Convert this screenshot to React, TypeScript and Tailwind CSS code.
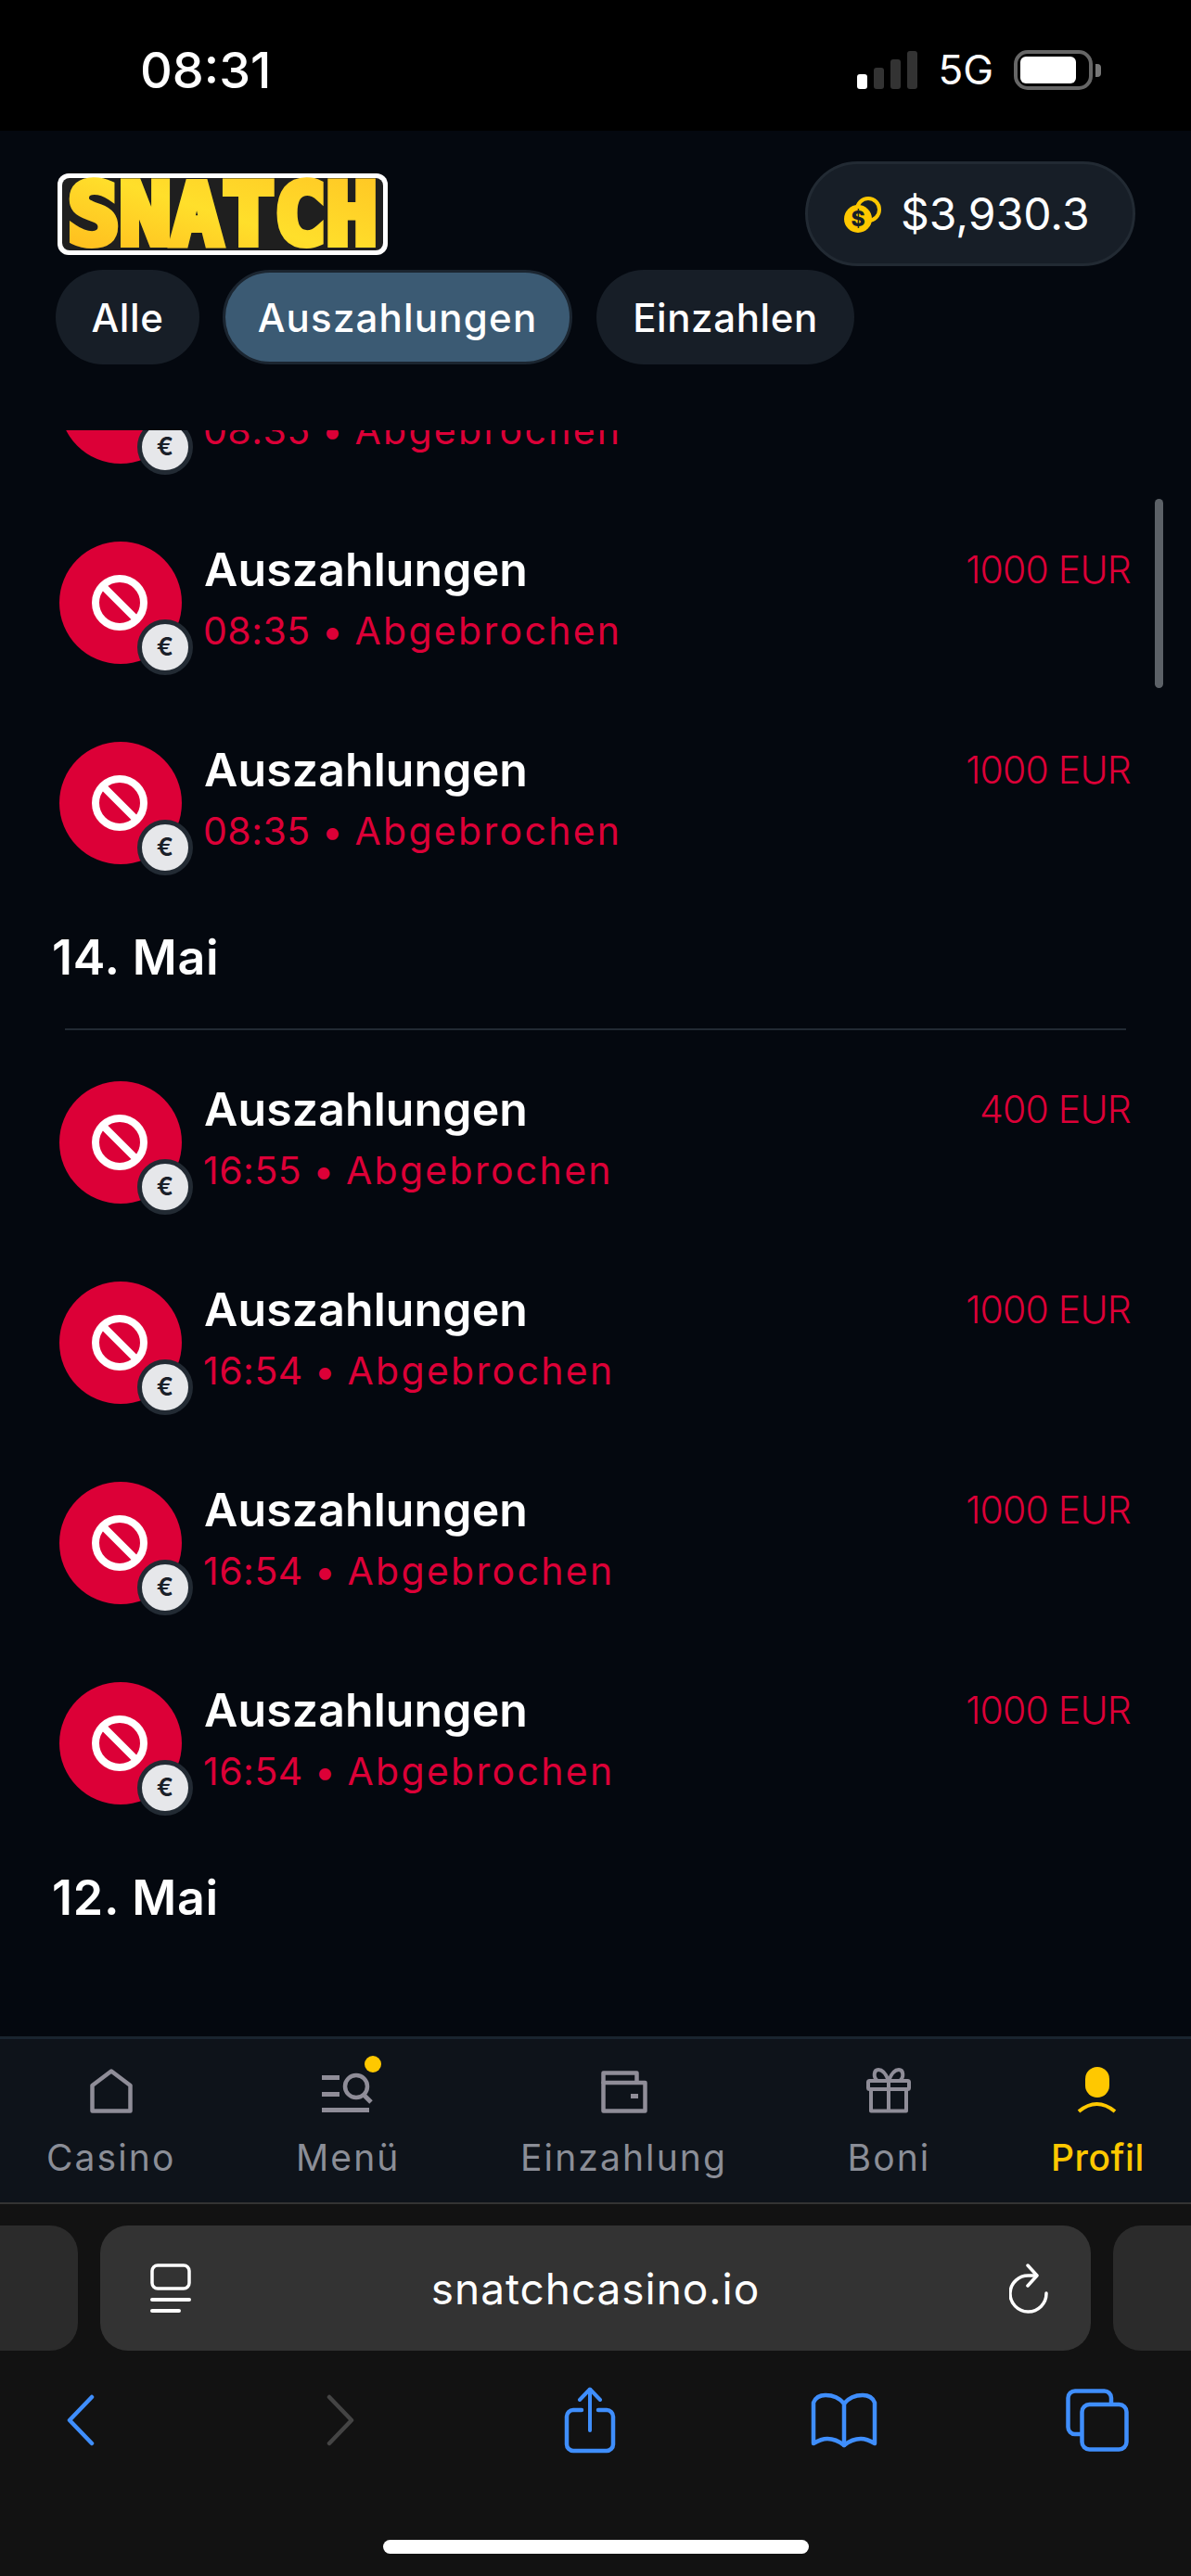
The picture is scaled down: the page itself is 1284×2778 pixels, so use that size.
import React from "react";

function Ban() {
  return (
    <svg className="mr-[2px]" width="60" height="60" viewBox="0 0 60 60" fill="none" stroke="#ffffff" strokeWidth="8">
      <circle cx="30" cy="30" r="26" />
      <path d="M12 12 L48 48" />
    </svg>
  );
}

function Row({ time, amount }: { time: string; amount: string }) {
  return (
    <div className="flex h-[216px] shrink-0 pl-[64px] pr-[65px] pt-[27px]">
      <div className="relative mt-[3px] flex h-[132px] w-[132px] shrink-0 items-center justify-center rounded-full bg-[#dc0037]">
        <Ban />
        <div className="absolute left-[84px] top-[84px] flex h-[60px] w-[60px] items-center justify-center rounded-full border-[5px] border-[#222a33] bg-[#e6e7ea] text-[27px] font-semibold text-[#1a2029]">
          €
        </div>
      </div>
      <div className="ml-[24px] flex-1">
        <div className="text-[50px] font-semibold leading-[67px] tracking-[0.1px] text-white">Auszahlungen</div>
        <div className="-ml-[1px] text-[41px] font-normal leading-[65px] text-[#dc0037]">
          <span className="tracking-[0.5px]">{time} • </span>
          <span className="tracking-[2.3px]">Abgebrochen</span>
        </div>
      </div>
      <div className="text-[41px] font-light leading-[66px] tracking-[-0.8px] text-[#dc0037]">{amount}</div>
    </div>
  );
}

function Heading({ children }: { children: string }) {
  return <div className="h-[92px] shrink-0 pl-[56px] text-[52px] font-semibold leading-[94px] tracking-[0.8px] text-white">{children}</div>;
}

function NavItem({ label, active, icon }: { label: string; active?: boolean; icon: React.ReactNode }) {
  return (
    <div className="flex flex-col items-center">
      <div className="relative flex h-[50px] items-end">{icon}</div>
      <div className={`mt-[18px] text-[39px] leading-[60px] ${active ? "font-medium tracking-[0.6px] text-[#ffc800]" : "font-normal tracking-[2.1px] text-[#8b8e97]"}`}>{label}</div>
    </div>
  );
}

function Logo() {
  return (
    <svg width="358" height="90" viewBox="0 0 358 90" className="block">
      <defs>
        <linearGradient id="lg" x1="0" y1="1" x2="1" y2="0">
          <stop offset="0" stopColor="#ffb81c" />
          <stop offset="0.5" stopColor="#ffdf2b" />
          <stop offset="1" stopColor="#ffc524" />
        </linearGradient>
      </defs>
      <rect x="1" y="1" width="356" height="88" rx="12" fill="#ffffff" />
      <rect x="6" y="6" width="346" height="78" rx="8" fill="#1f1f1f" />
      <text
        x="12"
        y="77"
        textLength="334"
        lengthAdjust="spacingAndGlyphs"
        fill="url(#lg)"
        stroke="url(#lg)"
        strokeWidth="8"
        strokeLinejoin="miter"
        style={{ fontFamily: "'DejaVu Sans Mono', monospace", fontWeight: 700, fontSize: 90 }}
      >
        SNATCH
      </text>
    </svg>
  );
}

export default function App() {
  return (
    <div className="flex h-[2778px] w-[1284px] flex-col overflow-hidden bg-[#04080f] [font-family:Inter,sans-serif]">
      {/* status bar */}
      <div className="flex h-[141px] shrink-0 items-start bg-black pl-[151px] pr-[97px]">
        <div className="mt-[44px] text-[54px] font-medium leading-[64px] text-white">08:31</div>
        <div className="ml-auto mt-[54px] flex items-start">
          <div className="flex h-[42px] items-end gap-[7px]">
            <div className="h-[16px] w-[11px] rounded-[3px] bg-white" />
            <div className="h-[23px] w-[11px] rounded-[3px] bg-[#333333]" />
            <div className="h-[32px] w-[11px] rounded-[3px] bg-[#333333]" />
            <div className="h-[41px] w-[11px] rounded-[3px] bg-[#333333]" />
          </div>
          <div className="ml-[22px] mt-[-5px] text-[44px] font-normal leading-[52px] text-white">5G</div>
          <div className="ml-[22px] flex h-[43px] w-[85px] items-center rounded-[15px] border-[4px] border-[#666666] pl-[3px]">
            <div className="h-[29px] w-[60px] rounded-[6px] bg-white" />
          </div>
          <div className="ml-[3px] mt-[15px] h-[14px] w-[6px] rounded-r-[4px] bg-[#777777]" />
        </div>
      </div>

      {/* header */}
      <div className="h-[323px] shrink-0 pt-[33px]">
        <div className="flex h-[113px] items-center justify-between pl-[61px] pr-[60px]">
          <Logo />
          <div className="flex h-[113px] w-[356px] items-center rounded-full border-[3px] border-[#222a33] bg-[#171e27] pl-[39px]">
            <svg width="40" height="40" viewBox="0 0 40 40">
              <circle cx="26" cy="15" r="12" fill="none" stroke="#ffc800" strokeWidth="4" />
              <circle cx="15" cy="25" r="15" fill="#ffc800" />
              <text x="15" y="33" textAnchor="middle" fontSize="23" fontWeight="800" fill="#171e27">$</text>
            </svg>
            <div className="ml-[21px] text-[48px] font-normal leading-[60px] text-white">$3,930.3</div>
          </div>
        </div>
        <div className="mt-[4px] flex h-[102px] items-center pl-[60px]">
          <div className="flex h-[102px] w-[155px] items-center justify-center rounded-full bg-[#171e27] text-[42px] font-medium tracking-[0.6px] text-white">Alle</div>
          <div className="ml-[25px] flex h-[102px] w-[377px] items-center justify-center rounded-full border-[3px] border-[#1b2530] bg-[#3b5a73] text-[42px] font-medium tracking-[1.2px] text-white">Auszahlungen</div>
          <div className="ml-[26px] flex h-[102px] w-[278px] items-center justify-center rounded-full bg-[#171e27] text-[42px] font-medium tracking-[0.6px] text-white">Einzahlen</div>
        </div>
      </div>

      {/* list */}
      <div className="relative min-h-0 flex-1 overflow-hidden bg-[#04080f]">
        <div className="mt-[-126px] flex flex-col">
          <Row time="08:35" amount="1000 EUR" />
          <Row time="08:35" amount="1000 EUR" />
          <Row time="08:35" amount="1000 EUR" />
          <Heading>14. Mai</Heading>
          <div className="ml-[70px] mt-[31px] h-[2px] w-[1144px] shrink-0 bg-[#222a33]" />
          <div className="h-[25px] shrink-0" />
          <Row time="16:55" amount="400 EUR" />
          <Row time="16:54" amount="1000 EUR" />
          <Row time="16:54" amount="1000 EUR" />
          <Row time="16:54" amount="1000 EUR" />
          <Heading>12. Mai</Heading>
        </div>
        <div className="absolute left-[1245px] top-[74px] h-[204px] w-[9px] rounded-full bg-[#5c6167]" />
      </div>

      {/* bottom nav */}
      <div className="flex h-[181px] shrink-0 items-start justify-between border-t-[3px] border-b-[2px] border-t-[#1a2530] border-b-[#333333] bg-[#0e131a] pl-[50px] pr-[50px] pt-[30px]">
        <NavItem
          label="Casino"
          icon={
            <svg width="46" height="48" viewBox="0 0 46 48" fill="none" stroke="#8f8d98" strokeWidth="4.5" strokeLinejoin="round">
              <path d="M2.5 18 L23 2.5 L43.5 18 V45.5 H2.5 Z" />
            </svg>
          }
        />
        <NavItem
          label="Menü"
          icon={
            <>
              <svg width="56" height="44" viewBox="0 0 56 44" fill="#8f8d98">
                <rect x="0" y="3" width="19" height="5" />
                <rect x="0" y="21" width="19" height="5" />
                <rect x="0" y="38" width="51" height="5" />
                <circle cx="37" cy="15" r="12" fill="none" stroke="#8f8d98" strokeWidth="4.5" />
                <path d="M45 24 L53 32" fill="none" stroke="#8f8d98" strokeWidth="5" />
              </svg>
              <div className="absolute left-[46px] top-[-12px] h-[18px] w-[18px] rounded-full bg-[#ffc800]" />
            </>
          }
        />
        <NavItem
          label="Einzahlung"
          icon={
            <svg width="50" height="46" viewBox="0 0 50 46" fill="none" stroke="#8f8d98" strokeWidth="4.5" strokeLinejoin="round">
              <path d="M2.5 14 V2.5 H38.5 V13" />
              <rect x="2.5" y="13" width="45" height="30.5" />
              <rect x="32" y="25" width="8" height="5" fill="#8f8d98" stroke="none" />
            </svg>
          }
        />
        <NavItem
          label="Boni"
          icon={
            <svg width="48" height="49" viewBox="0 0 48 49" fill="none" stroke="#8f8d98" strokeWidth="4" strokeLinejoin="round">
              <rect x="2" y="14" width="44" height="9" rx="1.5" />
              <path d="M5 23 V46.5 H43 V23" />
              <path d="M24 14 V46" />
              <path d="M24 14 C21 6 17 2 13 2 C8 2 7 10 12 14" />
              <path d="M24 14 C27 6 31 2 35 2 C40 2 41 10 36 14" />
            </svg>
          }
        />
        <NavItem
          active
          label="Profil"
          icon={
            <svg width="44" height="50" viewBox="0 0 44 50" fill="none">
              <rect x="9" y="0" width="26" height="33" rx="13" fill="#ffc800" />
              <path d="M2 48 Q21.5 32 41 48" stroke="#ffc800" strokeWidth="4" />
            </svg>
          }
        />
      </div>

      {/* safari */}
      <div className="h-[401px] shrink-0 bg-[#121212] pt-[23px]">
        <div className="flex h-[135px] gap-[24px]">
          <div className="w-[84px] rounded-r-[30px] bg-[#2b2b2b]" />
          <div className="flex w-[1068px] items-center rounded-[30px] bg-[#333333] pl-[54px] pr-[44px]">
            <svg width="44" height="54" viewBox="0 0 44 54" fill="none" stroke="#ffffff" strokeWidth="3.5" strokeLinecap="round">
              <rect x="2" y="2" width="40" height="25" rx="6" />
              <path d="M2 39 H42" strokeWidth="4" />
              <path d="M2 51 H31" strokeWidth="4" />
            </svg>
            <div className="flex-1 pr-[10px] text-center text-[46px] font-normal leading-[60px] tracking-[0.95px] text-white">snatchcasino.io</div>
            <svg width="44" height="54" viewBox="0 0 44 54" fill="none" stroke="#ffffff" strokeWidth="3.5" strokeLinecap="round" strokeLinejoin="round">
              <path d="M40 32 A19.5 19.5 0 1 1 22 13 H29" />
              <path d="M20 2 L30 13 L20 24" />
            </svg>
          </div>
          <div className="w-[84px] rounded-l-[30px] bg-[#2b2b2b]" />
        </div>
        <div className="flex h-[150px] items-center pl-[72px]">
          <svg width="30" height="56" viewBox="0 0 30 56" fill="none" stroke="#3f8efc" strokeWidth="4.5" strokeLinecap="round" strokeLinejoin="round">
            <path d="M27 3 L3 28 L27 53" />
          </svg>
          <svg className="ml-[250px]" width="30" height="56" viewBox="0 0 30 56" fill="none" stroke="#444444" strokeWidth="4.5" strokeLinecap="round" strokeLinejoin="round">
            <path d="M3 3 L27 28 L3 53" />
          </svg>
          <svg className="ml-[226px]" width="56" height="72" viewBox="0 0 56 72" fill="none" stroke="#3f8efc" strokeWidth="4.5" strokeLinecap="round" strokeLinejoin="round">
            <path d="M19 25 H10 A7 7 0 0 0 3 32 V62 A7 7 0 0 0 10 69 H46 A7 7 0 0 0 53 62 V32 A7 7 0 0 0 46 25 H37" />
            <path d="M28 47 V3" strokeWidth="4" />
            <path d="M17 14 L28 2.5 L39 14" strokeWidth="4" />
          </svg>
          <svg className="ml-[210px]" width="72" height="60" viewBox="0 0 72 60" fill="none" stroke="#3f8efc" strokeWidth="4.5" strokeLinecap="round" strokeLinejoin="round">
            <path d="M36 12 C31 6 23 3 16 3 C10 3 5 6 3 11 V55 C8 52 12 50 18 50 C25 50 31 53 36 57 C41 53 47 50 54 50 C60 50 64 52 69 55 V11 C67 6 62 3 56 3 C49 3 41 6 36 12 Z" />
            <path d="M36 12 V57" />
          </svg>
          <svg className="ml-[203px]" width="68" height="68" viewBox="0 0 68 68" fill="none" stroke="#3f8efc" strokeWidth="4.5" strokeLinejoin="round">
            <path d="M16 49 H10 A7.5 7.5 0 0 1 2.5 41.5 V10 A7.5 7.5 0 0 1 10 2.5 H41 A7.5 7.5 0 0 1 49 10 V17" />
            <rect x="17.5" y="17" width="48" height="48.5" rx="8" />
          </svg>
        </div>
        <div className="ml-[413px] mt-[54px] h-[15px] w-[459px] rounded-full bg-white" />
      </div>
    </div>
  );
}
